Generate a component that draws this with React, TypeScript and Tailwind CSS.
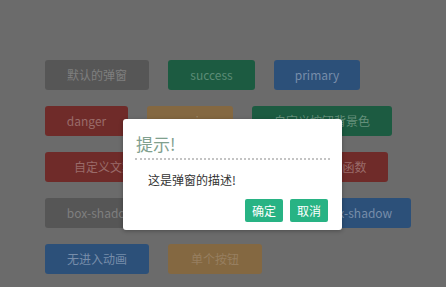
import React from 'react';

type Btn = { label: string; w: string; bg: string; fg: string };

const gray = 'bg-[#565656]';
const green = 'bg-[#1c5b41]';
const blue = 'bg-[#2c5079]';
const red = 'bg-[#6f2b29]';
const orange = 'bg-[#846841]';

const rows: Btn[][] = [
  [
    { label: '默认的弹窗', w: 'w-[104px]', bg: gray, fg: 'text-[#7f7f7f]' },
    { label: 'success', w: 'w-[87px]', bg: green, fg: 'text-[#5b8c76]' },
    { label: 'primary', w: 'w-[86px]', bg: blue, fg: 'text-[#778daa]' },
  ],
  [
    { label: 'danger', w: 'w-[83px]', bg: red, fg: 'text-[#9a6b69]' },
    { label: 'warning', w: 'w-[86px]', bg: orange, fg: 'text-[#9c8668]' },
    { label: '自定义按钮背景色', w: 'w-[140px]', bg: green, fg: 'text-[#65907b]' },
  ],
  [
    { label: '自定义文案', w: 'w-[118px]', bg: red, fg: 'text-[#9a6b69]' },
    { label: '自定义标题', w: 'w-[96px]', bg: red, fg: 'text-[#9a6b69]' },
    { label: '回调函数', w: 'w-[91px]', bg: red, fg: 'text-[#9a6b69]' },
  ],
  [
    { label: 'box-shadow', w: 'w-[112px]', bg: gray, fg: 'text-[#7f7f7f]' },
    { label: '无阴影', w: 'w-[74px]', bg: gray, fg: 'text-[#7f7f7f]' },
    { label: '自定义box-shadow', w: 'w-[142px]', bg: blue, fg: 'text-[#778daa]' },
  ],
  [
    { label: '无进入动画', w: 'w-[104px]', bg: blue, fg: 'text-[#778daa]' },
    { label: '单个按钮', w: 'w-[94px]', bg: orange, fg: 'text-[#977f60]' },
  ],
];

export default function App() {
  return (
    <div
      className="relative w-[446px] h-[287px] overflow-hidden bg-[#6b6b6b]"
      style={{ fontFamily: '"Noto Sans CJK SC", "Noto Sans", sans-serif' }}
    >
      {/* Buttons behind the mask */}
      <div className="flex flex-col gap-[16px] pt-[60px] pl-[45px]">
        {rows.map((row, i) => (
          <div key={i} className="flex gap-[19px]">
            {row.map((b) => (
              <div
                key={b.label}
                className={`${b.w} ${b.bg} ${b.fg} h-[30px] rounded-[3px] flex items-center justify-center text-[12px]`}
              >
                {b.label}
              </div>
            ))}
          </div>
        ))}
      </div>

      {/* Dialog */}
      <div className="absolute left-[123px] top-[119px] w-[219px] h-[111px] bg-white rounded-[3px] shadow-[0_1px_4px_rgba(0,0,0,0.3)] px-[12px] pt-[13px]">
        <div className="text-[17px] leading-[24px] text-[#80a08e] pl-[1px]">提示!</div>
        <div className="mt-[2px] border-b-2 border-dotted border-[#c4c4c4]" />
        <div className="mt-[12px] pl-[13px] text-[12px] leading-[16px] text-[#333]">这是弹窗的描述!</div>
        <div className="mt-[11px] flex justify-end gap-[7px] pr-[2px]">
          <button className="w-[38px] h-[23px] rounded-[2px] bg-[#28b384] text-white text-[12px] leading-none">确定</button>
          <button className="w-[38px] h-[23px] rounded-[2px] bg-[#28b384] text-white text-[12px] leading-none">取消</button>
        </div>
      </div>
    </div>
  );
}
